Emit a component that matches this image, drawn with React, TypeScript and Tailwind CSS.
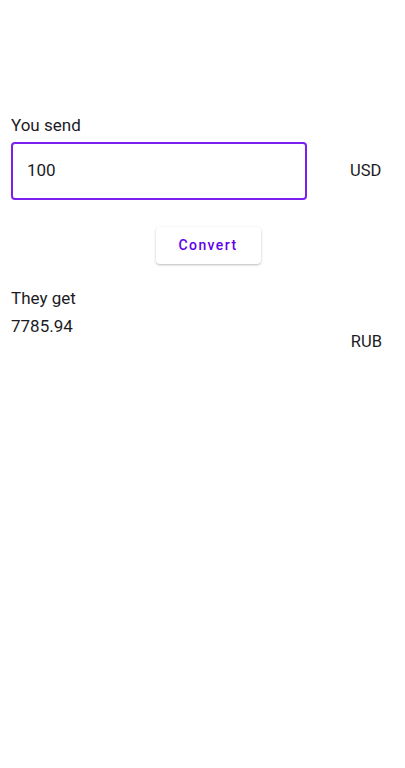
export default function App() {
  return (
    <div className="min-h-[768px] bg-white font-['Roboto',sans-serif] text-[#1c1b1f]">
      <div className="pl-[11px] pt-[115px]">
        <div className="text-[17px] leading-[20px]">You send</div>

        {/* input row */}
        <div className="mt-[7px] flex items-center">
          <div className="flex h-[58px] w-[296px] items-center rounded-[4px] border-2 border-[#7b1ff0] px-[14px]">
            <span className="text-[17px]">100</span>
          </div>
          <span className="ml-[43px] text-[16.5px]">USD</span>
        </div>

        <div className="mt-[27px] flex justify-center">
          <button className="h-[37px] w-[105px] rounded-[4px] bg-white text-[14px] font-medium tracking-[0.1em] text-[#6200ee] shadow-[0_1px_3px_rgba(0,0,0,0.2),0_1px_1px_rgba(0,0,0,0.08)]">
            Convert
          </button>
        </div>

        <div className="mt-[24px] text-[17px] leading-[20px]">They get</div>
        <div className="mt-[8px] flex">
          <span className="text-[17px] leading-[20px]">7785.94</span>
          <span className="ml-auto mr-[23px] mt-[16px] text-[16.5px] leading-[20px]">RUB</span>
        </div>
      </div>
    </div>
  );
}
